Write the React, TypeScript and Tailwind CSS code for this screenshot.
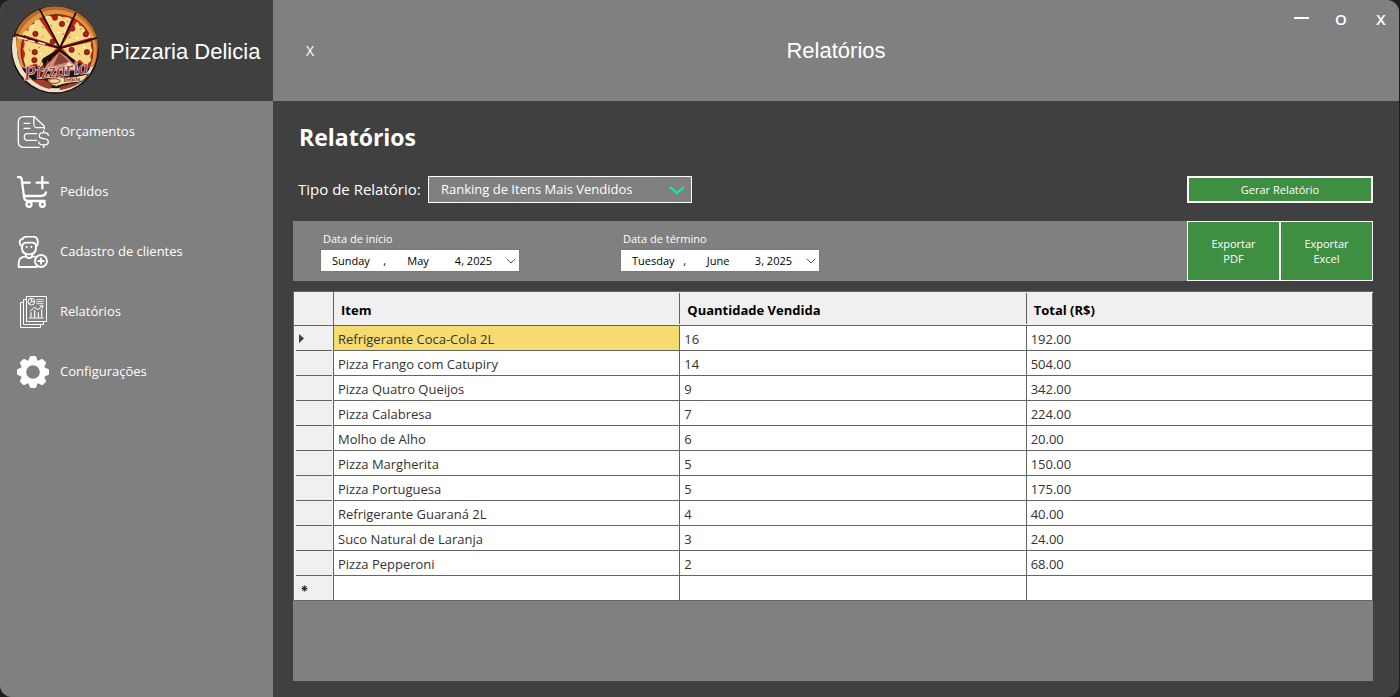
import type { ReactNode } from "react";

const line = {
  fill: "none",
  stroke: "currentColor",
  strokeLinecap: "round",
  strokeLinejoin: "round",
} as const;

function PizzaLogo() {
  const pepperoni = [
    [165, 53], [186, 72], [217, 86], [106, 102], [158, 125], [104, 157],
    [103, 181], [258, 103], [215, 150], [261, 157],
  ];
  const specks = [
    [145, 50], [150, 75], [205, 62], [172, 95], [192, 100], [80, 88], [90, 120],
    [125, 80], [130, 108], [228, 112], [245, 85], [235, 160], [125, 160],
    [85, 148], [120, 140], [250, 140], [212, 110], [240, 70], [100, 78], [160, 105],
  ];
  return (
    <svg viewBox="30 18 270 268" className="h-[89px] w-[90px] shrink-0" aria-hidden="true">
      <defs>
        <clipPath id="pie">
          <path d="M45 103 A122 127 0 0 1 118 27 A126 122 0 0 1 294 145 Q293 176 281 200 L258 205 L240 188 L222 192 L200 170 L178 155 L160 175 L145 190 L130 205 L110 198 L85 210 L62 200 Q50 160 45 103 Z" />
        </clipPath>
      </defs>
      <circle cx="165" cy="150" r="132" fill="#17100c" />
      <circle cx="165" cy="152" r="126" fill="#efe0c8" />
      <circle cx="168" cy="149" r="117" fill="#1b1411" />
      <path d="M178 150 L236 200 L238 214 L130 216 L142 180 Z" fill="#c98f7c" stroke="#1b1411" strokeWidth="3" />
      <path d="M178 158 L208 186 L160 198 Z" fill="#8b4138" />
      <path d="M206 186 L234 208 L190 208 Z" fill="#efe0c8" />
      <path d="M96 240 Q120 262 150 268 L162 252 L130 240 Z" fill="#a63a2c" />
      <path d="M178 262 L214 251 L240 250 Q215 266 180 272 Z" fill="#a63a2c" />
      <g clipPath="url(#pie)">
        <circle cx="166" cy="150" r="131" fill="#b9692a" />
        <circle cx="168" cy="151" r="122" fill="#dd9440" />
        <circle cx="171" cy="152" r="110" fill="#8f1912" />
        <circle cx="172" cy="152" r="107" fill="#c4251b" />
        <path d="M179 140 L134 50 Q148 42 156 52 Q174 42 188 52 Q204 48 214 58 Z" fill="#f6d983" />
        <path d="M186 138 L229 68 Q236 62 238 76 Q254 80 256 94 Q270 100 276 112 Z" fill="#f6d983" />
        <path d="M172 138 L118 58 Q104 58 102 72 Q86 74 84 90 Q68 94 68 104 Z" fill="#f6d983" />
        <path d="M168 145 L72 122 Q76 136 69 148 Q80 160 70 178 L77 200 L108 192 L122 202 L142 178 Z" fill="#f6d983" />
        <path d="M188 145 L274 126 Q270 140 278 152 Q268 168 274 182 L258 198 L240 180 L224 188 Z" fill="#f6d983" />
        {specks.map(([x, y], i) => (
          <path
            key={`${x}-${y}`}
            d={`M${x} ${y} l${i % 2 ? 6 : -5} 5`}
            stroke={i % 3 ? "#5a3a14" : "#fff6d8"}
            strokeWidth={i % 3 ? 2 : 5}
          />
        ))}
        {pepperoni.map(([x, y]) => (
          <circle key={`${x}-${y}`} cx={x} cy={y} r="8" fill="#b51d1b" stroke="#56120e" strokeWidth="2" />
        ))}
        <path d="M118 27 L180 145 L228 37 M180 145 L292 114 M45 103 L180 145" stroke="#140d0a" strokeWidth="5" fill="none" />
        <path d="M52 112 L82 119 M91 123 L104 126 M114 127 L136 133" stroke="#f3e6cf" strokeWidth="5" fill="none" />
        <path d="M178 146 L250 200 L238 198 L222 192 L178 157 L158 172 L150 194 L143 180 L134 206 L126 184 L118 200 L128 176 Z" fill="#140d0a" />
      </g>
      <path d="M44 112 A128 128 0 0 0 70 226" stroke="#efe0c8" strokeWidth="9" fill="none" />
      <path d="M140 240 Q160 228 190 232 Q226 234 266 222 Q252 252 218 249 Q190 252 170 260 Q150 258 140 240 Z" fill="#eed9a0" stroke="#1b1411" strokeWidth="3" />
      <ellipse cx="163" cy="244" rx="17" ry="7" fill="none" stroke="#8f2a1f" strokeWidth="3" />
      <text
        x="74"
        y="240"
        transform="rotate(-6 74 240)"
        fontFamily="'Liberation Serif', serif"
        fontSize="58"
        fontStyle="italic"
        fill="#a8282c"
        stroke="#ecd9cc"
        strokeWidth="4"
        paintOrder="stroke"
      >
        Pizzaria
      </text>
      <text x="191" y="246" transform="rotate(-4 191 246)" fontFamily="'Liberation Serif', serif" fontSize="17" fontWeight="700" fill="#6a1a14">
        Delicia
      </text>
    </svg>
  );
}

function InvoiceIcon() {
  return (
    <svg viewBox="51 42 96 96" className="size-8" {...line} strokeWidth="4" aria-hidden="true">
      <path d="M118 136 H72 Q55 136 55 120 V60 Q55 44 72 44 H103 L133 73 V80" />
      <path d="M102 46 Q99 76 108 77 H132" />
      <path d="M72 64 H90 M72 79 H90" />
      <path d="M110 95 H82 Q73 95 73 105 Q73 115 82 115 H110" />
      <path d="M145 100 Q144 92 131 92 Q118 92 118 101 Q118 109 131 110 Q145 111 145 120 Q145 129 131 129 Q117 129 116 120 M131 86 V92 M131 129 V136" />
    </svg>
  );
}

function CartIcon() {
  return (
    <svg viewBox="51 222 96 96" className="size-8" {...line} strokeWidth="7" aria-hidden="true">
      <path d="M54 225 H58 Q64 225 65 231 L72 284 Q73 297 84 297 H134" />
      <path d="M68 242 H89 M110 242 H144 M127 225 V259" />
      <path d="M73 282 H122 Q136 282 138 271" />
      <circle cx="87" cy="307" r="7.5" />
      <circle cx="127" cy="307" r="7.5" />
    </svg>
  );
}

function ClientIcon() {
  return (
    <svg viewBox="51 42 96 96" className="size-8" {...line} strokeWidth="5.5" aria-hidden="true">
      <path d="M65 73 Q57 68 60 56 Q62 51 68 51 Q70 44 80 44 H99 Q112 44 113 57 Q115 68 109 74" />
      <path d="M66 72 V79 Q67 97 87 97 Q107 97 108 79 V70 Q106 62 96 62 H78 Q70 62 66 72" />
      <path d="M80 74 V75 M94 74 V75" />
      <path d="M77 97 Q78 108 87 108 Q96 108 97 97" />
      <path d="M76 104 Q56 105 56 124 V135 H110 M98 104 H104" />
      <circle cx="123" cy="117" r="18" />
      <path d="M123 109 V125 M115 117 H131" />
    </svg>
  );
}

function ReportsIcon() {
  return (
    <svg viewBox="51 222 96 96" className="size-8" {...line} strokeWidth="3" strokeLinecap="butt" strokeLinejoin="miter" aria-hidden="true">
      <rect x="79.500" y="223.500" width="60" height="75" />
      <path d="M78 232.500 H70.500 V307.500 H130.500 V300 M69 241.500 H61.500 V316.500 H121.500 V309" />
      <circle cx="94" cy="239" r="10" />
      <path d="M94 229 V239 H104 M94 239 L87 246" />
      <path d="M109 233 H131 M109 239 H131 M109 245 H131" strokeWidth="2.4" />
      <path d="M87 288 H131 M93 286 V271 M104 286 V264 M115 286 V271 M125 286 V262" strokeWidth="3.4" />
      <path d="M90 268 L103 256 L114 263 L126 253 M119 251 H128 V259" />
    </svg>
  );
}

function GearIcon() {
  return (
    <svg viewBox="51 402 96 96" className="size-8" fill="currentColor" aria-hidden="true">
      <circle cx="99" cy="450" r="29" fill="none" stroke="currentColor" strokeWidth="17" />
      {[0, 45, 90, 135, 180, 225, 270, 315].map((angle) => (
        <path key={angle} d="M85 418 L89 406 Q90 402 94 402 H104 Q108 402 109 406 L113 418 Z" transform={`rotate(${angle} 99 450)`} />
      ))}
    </svg>
  );
}

const menu: { label: string; icon: ReactNode }[] = [
  { label: "Orçamentos", icon: <InvoiceIcon /> },
  { label: "Pedidos", icon: <CartIcon /> },
  { label: "Cadastro de clientes", icon: <ClientIcon /> },
  { label: "Relatórios", icon: <ReportsIcon /> },
  { label: "Configurações", icon: <GearIcon /> },
];

const rows = [
  ["Refrigerante Coca-Cola 2L", "16", "192.00"],
  ["Pizza Frango com Catupiry", "14", "504.00"],
  ["Pizza Quatro Queijos", "9", "342.00"],
  ["Pizza Calabresa", "7", "224.00"],
  ["Molho de Alho", "6", "20.00"],
  ["Pizza Margherita", "5", "150.00"],
  ["Pizza Portuguesa", "5", "175.00"],
  ["Refrigerante Guaraná 2L", "4", "40.00"],
  ["Suco Natural de Laranja", "3", "24.00"],
  ["Pizza Pepperoni", "2", "68.00"],
];

interface DateFieldProps {
  id: string;
  label: string;
  weekday: string;
  month: string;
  day: string;
}

function DateField({ id, label, weekday, month, day }: DateFieldProps) {
  return (
    <div className="w-[200px]">
      <label htmlFor={id} className="block pl-[3px] text-[11px] leading-4 text-white">
        {label}
      </label>
      <button
        id={id}
        type="button"
        aria-haspopup="dialog"
        className="mt-[2px] flex h-[23px] w-full items-center border border-[#7a7a7a] bg-white pt-px pr-[3px] text-[11px] text-black"
      >
        <span className="flex w-[65px] justify-between pl-[11px]">
          <span>{weekday}</span>
          <span>,</span>
        </span>
        <span className="w-[64px] text-center">{month}</span>
        <span className="w-[42px] text-right">{day}</span>
        <svg viewBox="0 0 10 6" className="ml-auto h-[6px] w-[10px]" {...line} aria-hidden="true">
          <path d="M1 1 L5 5 L9 1" stroke="#555555" />
        </svg>
      </button>
    </div>
  );
}

function RowHeader({ children }: { children?: ReactNode }) {
  return (
    <th scope="row" className="border-r border-l border-[#646464] bg-[#f0f0f0] p-0 font-normal">
      <span className="ml-[2px] mr-px flex h-[25px] items-center border-b border-[#646464] pl-[3px]">{children}</span>
    </th>
  );
}

const cell = "h-[25px] border-r border-b border-[#646464] pt-[2px] pb-0 pl-1";

function SalesTable() {
  return (
    <table className="w-full table-fixed border-separate border-spacing-0 border-t border-[#646464] text-left text-[13px] leading-4 text-[#333333]">
      <colgroup>
        <col className="w-[41px]" />
        <col />
        <col />
        <col />
      </colgroup>
      <thead>
        <tr className="bg-[#f0f0f0] font-bold text-black">
          <td className="h-[34px] border-r border-b border-l border-[#646464] p-0" />
          {["Item", "Quantidade Vendida", "Total (R$)"].map((title) => (
            <th key={title} scope="col" className="h-[34px] border-b border-[#646464] p-0">
              <span className="flex h-[31px] items-center border-r border-[#646464] pt-[2px] pl-[7px]">{title}</span>
            </th>
          ))}
        </tr>
      </thead>
      <tbody>
        {rows.map(([item, quantity, total], index) => (
          <tr key={item} className="bg-white">
            <RowHeader>
              {index === 0 && (
                <svg viewBox="0 0 5 9" className="h-[9px] w-[5px]" aria-label="Linha atual">
                  <path d="M0 0 L5 4.5 L0 9 Z" fill="#404040" />
                </svg>
              )}
            </RowHeader>
            <td className={index === 0 ? `${cell} bg-[#f6dc70]` : cell}>{item}</td>
            <td className={cell}>{quantity}</td>
            <td className={cell}>{total}</td>
          </tr>
        ))}
        <tr className="bg-white">
          <th scope="row" className="h-[25px] border-r border-b border-l border-[#646464] bg-[#f0f0f0] py-0 pl-[7px]">
            <svg viewBox="0 0 7 7" className="h-[7px] w-[7px]" aria-label="Nova linha">
              <path d="M3.5 .5 V6.5 M.5 3.5 H6.5 M1.3 1.3 L5.7 5.7 M5.7 1.3 L1.3 5.7" stroke="#333333" strokeWidth="1.2" />
            </svg>
          </th>
          <td className={cell} />
          <td className={cell} />
          <td className={cell} />
        </tr>
      </tbody>
    </table>
  );
}

export default function App() {
  return (
    <div className="min-h-screen bg-[#1e1e1e] pr-px font-['Open_Sans','Noto_Sans',sans-serif]">
      <div className="flex min-h-screen overflow-hidden rounded-xl bg-[#404040] text-white">
        <aside className="flex w-[273px] shrink-0 flex-col bg-[#808080]">
          <div className="flex h-[101px] items-center gap-[10px] bg-[#404040] pl-[10px]">
            <PizzaLogo />
            <span className="pt-[2px] font-['Liberation_Sans',sans-serif] text-[22px] whitespace-nowrap">Pizzaria Delicia</span>
          </div>
          <nav aria-label="Menu" className="pt-px">
            {menu.map(({ label, icon }) => (
              <a key={label} href="#" className="flex h-[60px] items-center gap-[11px] pl-[17px] text-[13px]">
                {icon}
                {label}
              </a>
            ))}
          </nav>
        </aside>

        <div className="flex min-w-0 flex-1 flex-col">
          <header className="grid h-[101px] grid-cols-[1fr_auto_1fr] items-center bg-[#808080]">
            <button type="button" aria-label="Fechar página" className="ml-5 w-[34px] pt-px text-sm">
              X
            </button>
            <p className="font-['Liberation_Sans',sans-serif] text-[22px]">Relatórios</p>
            <div className="flex gap-1 self-start justify-self-end text-[15px] font-semibold">
              <button type="button" aria-label="Minimizar" className="flex h-[38px] w-9 items-center justify-center">
                <span className="mb-[3px] h-[2px] w-[15px] bg-white" />
              </button>
              <button type="button" aria-label="Maximizar" className="h-[38px] w-9">O</button>
              <button type="button" aria-label="Fechar" className="h-[38px] w-9">X</button>
            </div>
          </header>

          <main className="flex flex-1 flex-col pt-5 pr-[26px] pb-4 pl-5">
            <h1 className="pl-[6px] text-[23px] leading-8 font-bold">Relatórios</h1>

            <div className="mt-[23px] flex h-[27px] items-center">
              <label htmlFor="report-type" className="w-[135px] pl-[5px] text-[15px] whitespace-nowrap">
                Tipo de Relatório:
              </label>
              <div className="relative h-full w-[264px]">
                <select
                  id="report-type"
                  className="h-full w-full appearance-none border border-white bg-[#808080] pt-px pl-3 text-[13px] text-white"
                >
                  <option>Ranking de Itens Mais Vendidos</option>
                </select>
                <svg viewBox="0 0 16 9" className="pointer-events-none absolute top-[10px] right-[7px] h-[9px] w-4" {...line} strokeLinecap="butt" strokeLinejoin="miter" aria-hidden="true">
                  <path d="M1 1 L8 7 L15 1" stroke="#00fa9a" strokeWidth="2" />
                </svg>
              </div>
              <button type="button" className="ml-auto h-full w-[186px] border-2 border-white bg-[#3e8f41] pt-px text-[11px]">
                Gerar Relatório
              </button>
            </div>

            <div className="mt-[18px] flex h-[60px]">
              <div className="flex flex-1 gap-[100px] bg-[#808080] pt-[10px] pl-[27px]">
                <DateField id="start-date" label="Data de início" weekday="Sunday" month="May" day="4, 2025" />
                <DateField id="end-date" label="Data de término" weekday="Tuesday" month="June" day="3, 2025" />
              </div>
              <button type="button" className="w-[93px] border border-white bg-[#3e8f41] px-5 text-[11px] leading-[15px]">
                Exportar PDF
              </button>
              <button type="button" className="w-[93px] border border-white bg-[#3e8f41] px-5 text-[11px] leading-[15px]">
                Exportar Excel
              </button>
            </div>

            <div className="mt-[10px] flex-1 bg-[#808080]">
              <SalesTable />
            </div>
          </main>
        </div>
      </div>
    </div>
  );
}
